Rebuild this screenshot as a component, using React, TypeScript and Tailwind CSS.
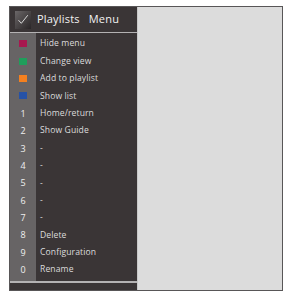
import React from 'react';

type Row = { key: string; color?: string; label: string };

const rows: Row[] = [
    { key: 'r', color: 'bg-[#a8174f]', label: 'Hide menu' },
    { key: 'g', color: 'bg-[#1f9e5b]', label: 'Change view' },
    { key: 'y', color: 'bg-[#f4801f]', label: 'Add to playlist' },
    { key: 'b', color: 'bg-[#2652a6]', label: 'Show list' },
    { key: '1', label: 'Home/return' },
    { key: '2', label: 'Show Guide' },
    { key: '3', label: '-' },
    { key: '4', label: '-' },
    { key: '5', label: '-' },
    { key: '6', label: '-' },
    { key: '7', label: '-' },
    { key: '8', label: 'Delete' },
    { key: '9', label: 'Configuration' },
    { key: '0', label: 'Rename' },
];

const CheckBox = () => (
    <div className="w-[16px] h-[18px] bg-gradient-to-br from-[#6b6768] via-[#4a4647] to-[#2a2627] flex items-center justify-center">
        <svg width="12" height="11" viewBox="0 0 12 11" fill="none">
            <path d="M1.5 6.2 L4.3 9.3 L10.8 1.2" stroke="#d8d8d8" strokeWidth="1" />
        </svg>
    </div>
);

const App: React.FC = () => {
    return (
        <div className="w-[290px] h-[296px] bg-white pt-[6px] pl-[9px]" style={{ fontFamily: '"Open Sans", "Noto Sans", sans-serif' }}>
            <div className="w-[274px] h-[285px] flex border border-[#585657]">
                <div className="w-[127px] bg-[#3a3536] flex flex-col">
                    <div className="h-[26px] border-b border-[#b4b2b3] flex items-center pl-[5px] gap-[6px]">
                        <CheckBox />
                        <span className="text-[11px] text-[#f2f2f2] tracking-[0.2px] flex gap-[9px]">
                            <span>Playlists</span>
                            <span>Menu</span>
                        </span>
                    </div>
                    <div className="h-[248px] flex">
                        <div className="w-[26px] h-full bg-[#676465] pt-[2px]">
                            {rows.map((r) => (
                                <div key={r.key} className="h-[17.4px] flex items-center justify-center">
                                    {r.color ? (
                                        <div className={`w-[8px] h-[7px] ${r.color}`} />
                                    ) : (
                                        <span className="text-[9px] text-[#efefef] leading-none">{r.key}</span>
                                    )}
                                </div>
                            ))}
                        </div>
                        <div className="flex-1 pt-[2px] pl-[4px]">
                            {rows.map((r) => (
                                <div key={r.key} className="h-[17.4px] flex items-center text-[8.6px] text-[#dcdcdc] tracking-[0.1px] leading-none">
                                    {r.label}
                                </div>
                            ))}
                        </div>
                    </div>
                    <div className="h-[2px] bg-[#b4b2b3]" />
                    <div className="flex-1" />
                </div>
                <div className="flex-1 bg-[#dcdcdc] border-l border-[#c8c8c8]" />
            </div>
        </div>
    );
};

export default App;
